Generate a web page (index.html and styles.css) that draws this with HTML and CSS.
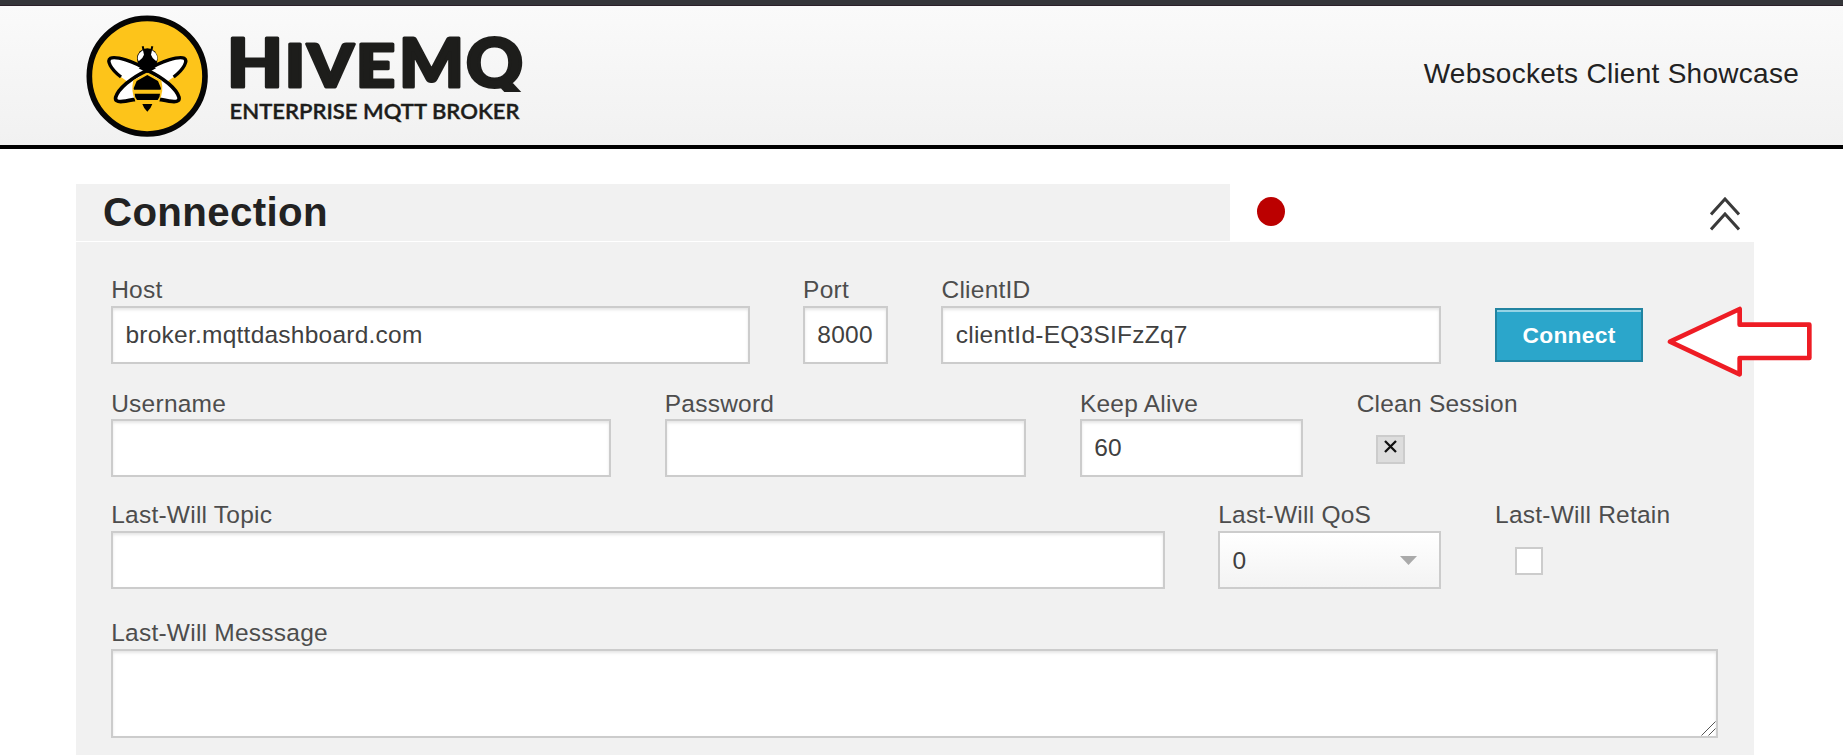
FILE: index.html
```html
<!DOCTYPE html>
<html lang="en">
<head>
<meta charset="utf-8">
<title>HiveMQ Websockets Client Showcase</title>
<link rel="stylesheet" href="styles.css">
</head>
<body>
<div class="topbar"></div>
<header class="header">
  <svg class="logo" width="440" height="124" viewBox="84 12 440 124">
    <defs><clipPath id="tail"><path d="M455 30h80v62h-80z"/></clipPath></defs>
    <g transform="translate(70 0) scale(.33333)">
      <circle cx="231.500" cy="228.500" r="173.500" fill="#fdc41a" stroke="#050505" stroke-width="17"/>
      <path d="M218 139l4 16M247 139l-4 16" stroke="#000" stroke-width="6" fill="none"/>
      <ellipse cx="232" cy="176" rx="31" ry="31" fill="#000"/>
      <path d="M219 151q-16 9-16 25l3 8q13-9 16-20zM246 151q16 9 16 25l-3 8q-13-9-16-20z" fill="#fff"/>
      <path d="M228 212C195 190 145 171 122 176c-9 6 2 34 31 55l20 14 20-10zM236 212c33-22 83-41 106-36 9 6-2 34-31 55l-20 14-20-10z" fill="#fff"/>
      <path d="M213 222c-28 14-67 45-75 72-4 18 27 12 53 4zM251 222c28 14 67 45 75 72 4 18-27 12-53 4z" fill="#fff"/>
      <path d="M153 231C121 206 110 182 121 175c16-7 70 8 111 36 41-28 95-43 111-36 11 7 0 31-32 56" fill="none" stroke="#000" stroke-width="10"/>
      <path d="M232 211C183 234 145 266 137 292c-4 20 29 12 58 6M232 211c49 23 87 55 95 81 4 20-29 12-58 6" fill="none" stroke="#000" stroke-width="11"/>
      <path d="M232 219l42 22q8 34-6 61h-72q-14-27-6-61z" fill="#fdc41a"/>
      <path d="M232 225l32 18 9 22-1 4h-80l-1-4 9-22zM194 281h76q0 12-7 19h-62q-7-7-7-19zM217 312h30q-4 13-15 23-11-10-15-23z" fill="#000"/>
      <path d="M206 205l26-12 26 12-26 14z" fill="#000"/>
    </g>
    <g class="logo-name">
      <text x="227" y="86.700" font-size="67.500" textLength="56" lengthAdjust="spacingAndGlyphs">H</text>
      <text x="285" y="86.700" font-size="58.500" textLength="20" lengthAdjust="spacingAndGlyphs">I</text>
      <text x="307.500" y="86.700" font-size="58.500" textLength="46" lengthAdjust="spacingAndGlyphs">V</text>
      <text x="356" y="86.700" font-size="58.500" textLength="39" lengthAdjust="spacingAndGlyphs">E</text>
      <text x="399" y="86.700" font-size="67.500" textLength="65" lengthAdjust="spacingAndGlyphs">M</text>
      <text x="466" y="86.700" font-size="67.500" textLength="57" lengthAdjust="spacingAndGlyphs" clip-path="url(#tail)">Q</text>
    </g>
    <text class="logo-tag" x="229.500" y="119" textLength="290" lengthAdjust="spacingAndGlyphs">ENTERPRISE MQTT BROKER</text>
  </svg>
  <div class="tagline">Websockets Client Showcase</div>
</header>

<main class="main">
  <div class="panel-head">
    <h3 class="panel-title">Connection</h3>
    <span class="status"></span>
    <svg class="collapse" width="30" height="34" viewBox="0 0 30 34">
      <path d="M1 17.500L15 2 29 17.500M1 32.500L15 17 29 32.500" fill="none" stroke="#3a3a3a" stroke-width="3"/>
    </svg>
  </div>
  <form class="panel">
    <div class="row row-server">
      <div class="field span5"><label>Host</label><input class="input" value="broker.mqttdashboard.com"></div>
      <div class="field span1"><label>Port</label><input class="input" value="8000"></div>
      <div class="field span4"><label>ClientID</label><input class="input" value="clientId-EQ3SIFzZq7"></div>
      <div class="field span2 action"><button type="button" class="connect">Connect</button></div>
    </div>
    <div class="row row-auth">
      <div class="field span4"><label>Username</label><input class="input"></div>
      <div class="field span3"><label>Password</label><input class="input" type="password"></div>
      <div class="field span2"><label>Keep Alive</label><input class="input" value="60"></div>
      <div class="field span3"><label>Clean Session</label>
        <span class="check checked"><svg width="13" height="13" viewBox="0 0 13 13"><path d="M1 1l11 11M12 1L1 12" stroke="#111" stroke-width="2.300"/></svg></span>
      </div>
    </div>
    <div class="row row-will">
      <div class="field span8"><label>Last-Will Topic</label><input class="input"></div>
      <div class="field span2"><label>Last-Will QoS</label>
        <div class="select"><span>0</span><svg width="17" height="9" viewBox="0 0 17 9"><path d="M0 0h17L8.500 9z" fill="#aaa"/></svg></div>
      </div>
      <div class="field span2"><label>Last-Will Retain</label><span class="check empty"></span></div>
    </div>
    <div class="row">
      <div class="field span12"><label>Last-Will Messsage</label>
        <div class="area-wrap">
          <textarea class="input area"></textarea>
          <svg class="grip" width="15" height="15" viewBox="0 0 15 15"><path d="M.5 14.500l14-14M7.500 14.500l7-7" stroke="#555" stroke-width="1"/></svg>
        </div>
      </div>
    </div>
  </form>
</main>

<svg class="pointer" width="148" height="74" viewBox="0 0 444 222">
  <path d="M9 110L218 12V59H427V159H218V208Z" fill="#fff" stroke="#ee1c24" stroke-width="14" stroke-linejoin="round"/>
</svg>
</body>
</html>
```
FILE: styles.css
```css
* { box-sizing: border-box; }
html, body { height: 100%; }
body {
  margin: 0;
  overflow: hidden;
  position: relative;
  background: #fff;
  color: #222;
  font-family: "Liberation Sans", Arial, sans-serif;
}
.topbar { height: 6px; background: #35363a; border-bottom: 1px solid #2b2029; }
.header {
  display: flex;
  justify-content: space-between;
  height: 143px;
  padding: 6px 44px 0 84px;
  background: linear-gradient(#fafafa, #f1f1f1);
  border-bottom: 4px solid #000;
}
.logo { display: block; overflow: visible; }
.logo-name { font-family: Lato, sans-serif; font-weight: 900; fill: #1d1d1b; stroke: #1d1d1b; stroke-width: 3.2; stroke-linejoin: round; }
.logo-tag { font-family: Lato, sans-serif; font-weight: 600; font-size: 21.5px; fill: #1d1d1b; stroke: #1d1d1b; stroke-width: .4; }
.tagline { font-size: 28px; line-height: 34px; letter-spacing: .27px; padding-top: 45px; white-space: nowrap; }

.main { width: 1678px; margin: 35px 0 0 76px; }
.panel-head { display: flex; height: 58px; align-items: flex-start; }
.panel-title {
  width: 1154px;
  height: 57px;
  margin: 0;
  padding-left: 27px;
  background: #f1f1f1;
  font-size: 40.25px;
  line-height: 57px;
  letter-spacing: .35px;
}
.status { width: 28px; height: 29px; margin: 13px 0 0 27px; border-radius: 50%; background: #b00; }
.collapse { margin: 13px 14px 0 auto; }

.panel { height: 513px; padding: 30px 35.8px 0 35.2px; background: #f1f1f1; }
.row { display: grid; grid-template-columns: repeat(12, minmax(0, 1fr)); column-gap: 53.6px; }
.row-server { margin-bottom: 22px; }
.row-auth { margin-bottom: 20px; }
.row-auth label { height: 33px; }
.row-will { margin-bottom: 26px; }
.span1 { grid-column: span 1; }
.span2 { grid-column: span 2; }
.span3 { grid-column: span 3; }
.span4 { grid-column: span 4; }
.span5 { grid-column: span 5; }
.span8 { grid-column: span 8; }
.span12 { grid-column: span 12; }
label { display: block; height: 34px; font-size: 24.5px; line-height: 36px; letter-spacing: .24px; color: #4d4d4d; white-space: nowrap; }
.input {
  display: block;
  width: 100%;
  height: 58px;
  margin: 0;
  padding: 0 12.25px;
  border: 2px solid #ccc;
  border-radius: 0;
  outline: 0;
  background: #fff;
  box-shadow: inset 0 2px 3px rgba(0, 0, 0, .1);
  color: #404040;
  font: 24.5px "Liberation Sans", Arial, sans-serif;
  letter-spacing: .24px;
}
.action { padding-top: 36px; }
.connect {
  display: block;
  width: 148px;
  height: 54px;
  padding: 0;
  border: 2px solid #2284a1;
  background: #2ba6cb;
  box-shadow: inset 0 2px 0 rgba(255, 255, 255, .5);
  color: #fff;
  font: bold 22.75px/50px "Liberation Sans", Arial, sans-serif;
  letter-spacing: .3px;
}
.check { display: block; border: 2px solid #ccc; background: #fff; }
.checked { width: 29px; height: 29px; margin: 16px 0 0 19px; padding: 3px 0 0 6px; background: #ddd; }
.checked svg { display: block; }
.empty { width: 28px; height: 28px; margin: 16px 0 0 20px; }
.select {
  display: flex;
  align-items: center;
  justify-content: space-between;
  height: 58px;
  padding: 0 22px 0 12.25px;
  border: 2px solid #ccc;
  background: linear-gradient(#fff, #f3f3f3);
  color: #404040;
  font-size: 24.5px;
}
.select span { padding-top: 2px; }
.area-wrap { position: relative; }
.area { height: 89px; resize: none; }
.grip { position: absolute; right: 2px; bottom: 2px; }
.pointer { position: absolute; left: 1667px; top: 305px; }
```
